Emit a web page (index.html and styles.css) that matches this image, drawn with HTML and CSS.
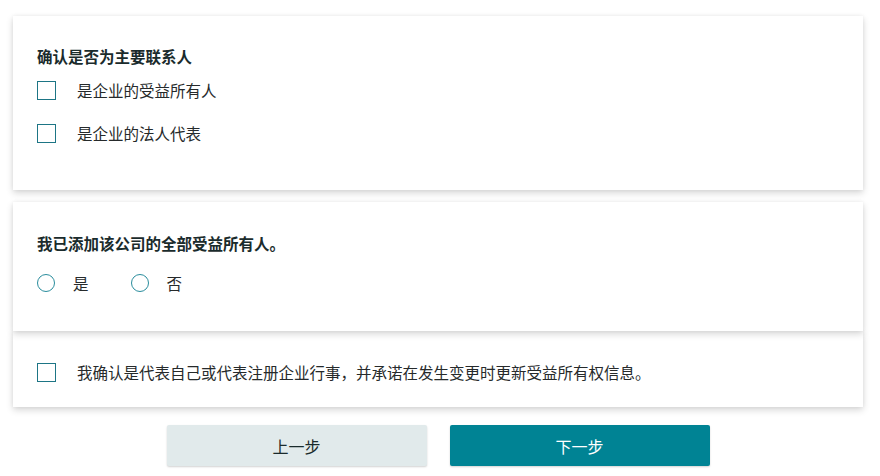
FILE: index.html
```html
<!DOCTYPE html>
<html lang="zh-CN">
<head>
<meta charset="utf-8">
<title>受益所有人确认</title>
<link rel="stylesheet" href="styles.css">
</head>
<body>
<main class="page">
  <section class="card card-contact">
    <h2 class="card-title">确认是否为主要联系人</h2>
    <div class="check-list">
      <label class="check-row"><span class="checkbox"></span><span class="label-text">是企业的受益所有人</span></label>
      <label class="check-row"><span class="checkbox"></span><span class="label-text">是企业的法人代表</span></label>
    </div>
  </section>
  <section class="card card-owners">
    <h2 class="card-title">我已添加该公司的全部受益所有人。</h2>
    <div class="radio-row">
      <label class="radio-option"><span class="radio"></span><span class="label-text">是</span></label>
      <label class="radio-option"><span class="radio"></span><span class="label-text">否</span></label>
    </div>
  </section>
  <section class="card card-confirm">
    <label class="check-row"><span class="checkbox"></span><span class="label-text">我确认是代表自己或代表注册企业行事，并承诺在发生变更时更新受益所有权信息。</span></label>
  </section>
  <div class="actions">
    <button class="btn btn-secondary" type="button">上一步</button>
    <button class="btn btn-primary" type="button">下一步</button>
  </div>
</main>
</body>
</html>
```

FILE: styles.css
```css
* { box-sizing: border-box; }
html, body { margin: 0; padding: 0; background: #ffffff; }
body {
  font-family: "Noto Sans CJK SC", "Noto Sans", sans-serif;
  color: #222;
  width: 880px;
  height: 476px;
  overflow: hidden;
}
.page {
  width: 850px;
  margin-left: 13px;
  padding-top: 16px;
  display: flex;
  flex-direction: column;
}
.card {
  background: #fff;
  box-shadow: 0 3px 7px rgba(0, 0, 0, 0.16), 0 0 4px rgba(0, 0, 0, 0.05);
  padding-left: 24px;
  padding-right: 24px;
}
.card-contact {
  height: 174px;
  padding-top: 28px;
}
.card-owners {
  margin-top: 12px;
  height: 129px;
  padding-top: 29px;
  position: relative;
  z-index: 1;
}
.card-confirm {
  height: 76px;
  padding-top: 29px;
}
.card-title {
  margin: 0;
  font-size: 15.5px;
  line-height: 24px;
  font-weight: 700;
  color: #1a2b2c;
}
.check-list {
  margin-top: 10px;
  display: flex;
  flex-direction: column;
  gap: 19px;
}
.check-row {
  display: flex;
  align-items: center;
  height: 24px;
}
.checkbox {
  width: 19px;
  height: 19px;
  border: 1.5px solid #1d7585;
  background: #fff;
  flex: none;
  margin-right: 21px;
}
.label-text {
  font-size: 15.5px;
  line-height: 24px;
  color: #262a2b;
}
.radio-row {
  margin-top: 16px;
  display: flex;
  align-items: center;
  height: 24px;
}
.radio-option {
  display: flex;
  align-items: center;
  margin-right: 42px;
}
.radio {
  width: 18px;
  height: 18px;
  border: 1.5px solid #2a8d9d;
  border-radius: 50%;
  flex: none;
  margin-right: 18px;
}
.actions {
  margin-top: 18px;
  display: flex;
  justify-content: center;
  gap: 23px;
}
.btn {
  width: 260px;
  height: 41px;
  border: none;
  border-radius: 2px;
  font-family: "Noto Sans CJK SC", "Noto Sans", sans-serif;
  font-size: 16px;
  box-shadow: 0 1px 2px rgba(0, 0, 0, 0.18);
  cursor: pointer;
}
.btn-secondary {
  background: #e1eaeb;
  color: #1a2b2c;
}
.btn-primary {
  background: #008394;
  color: #ffffff;
}
```
